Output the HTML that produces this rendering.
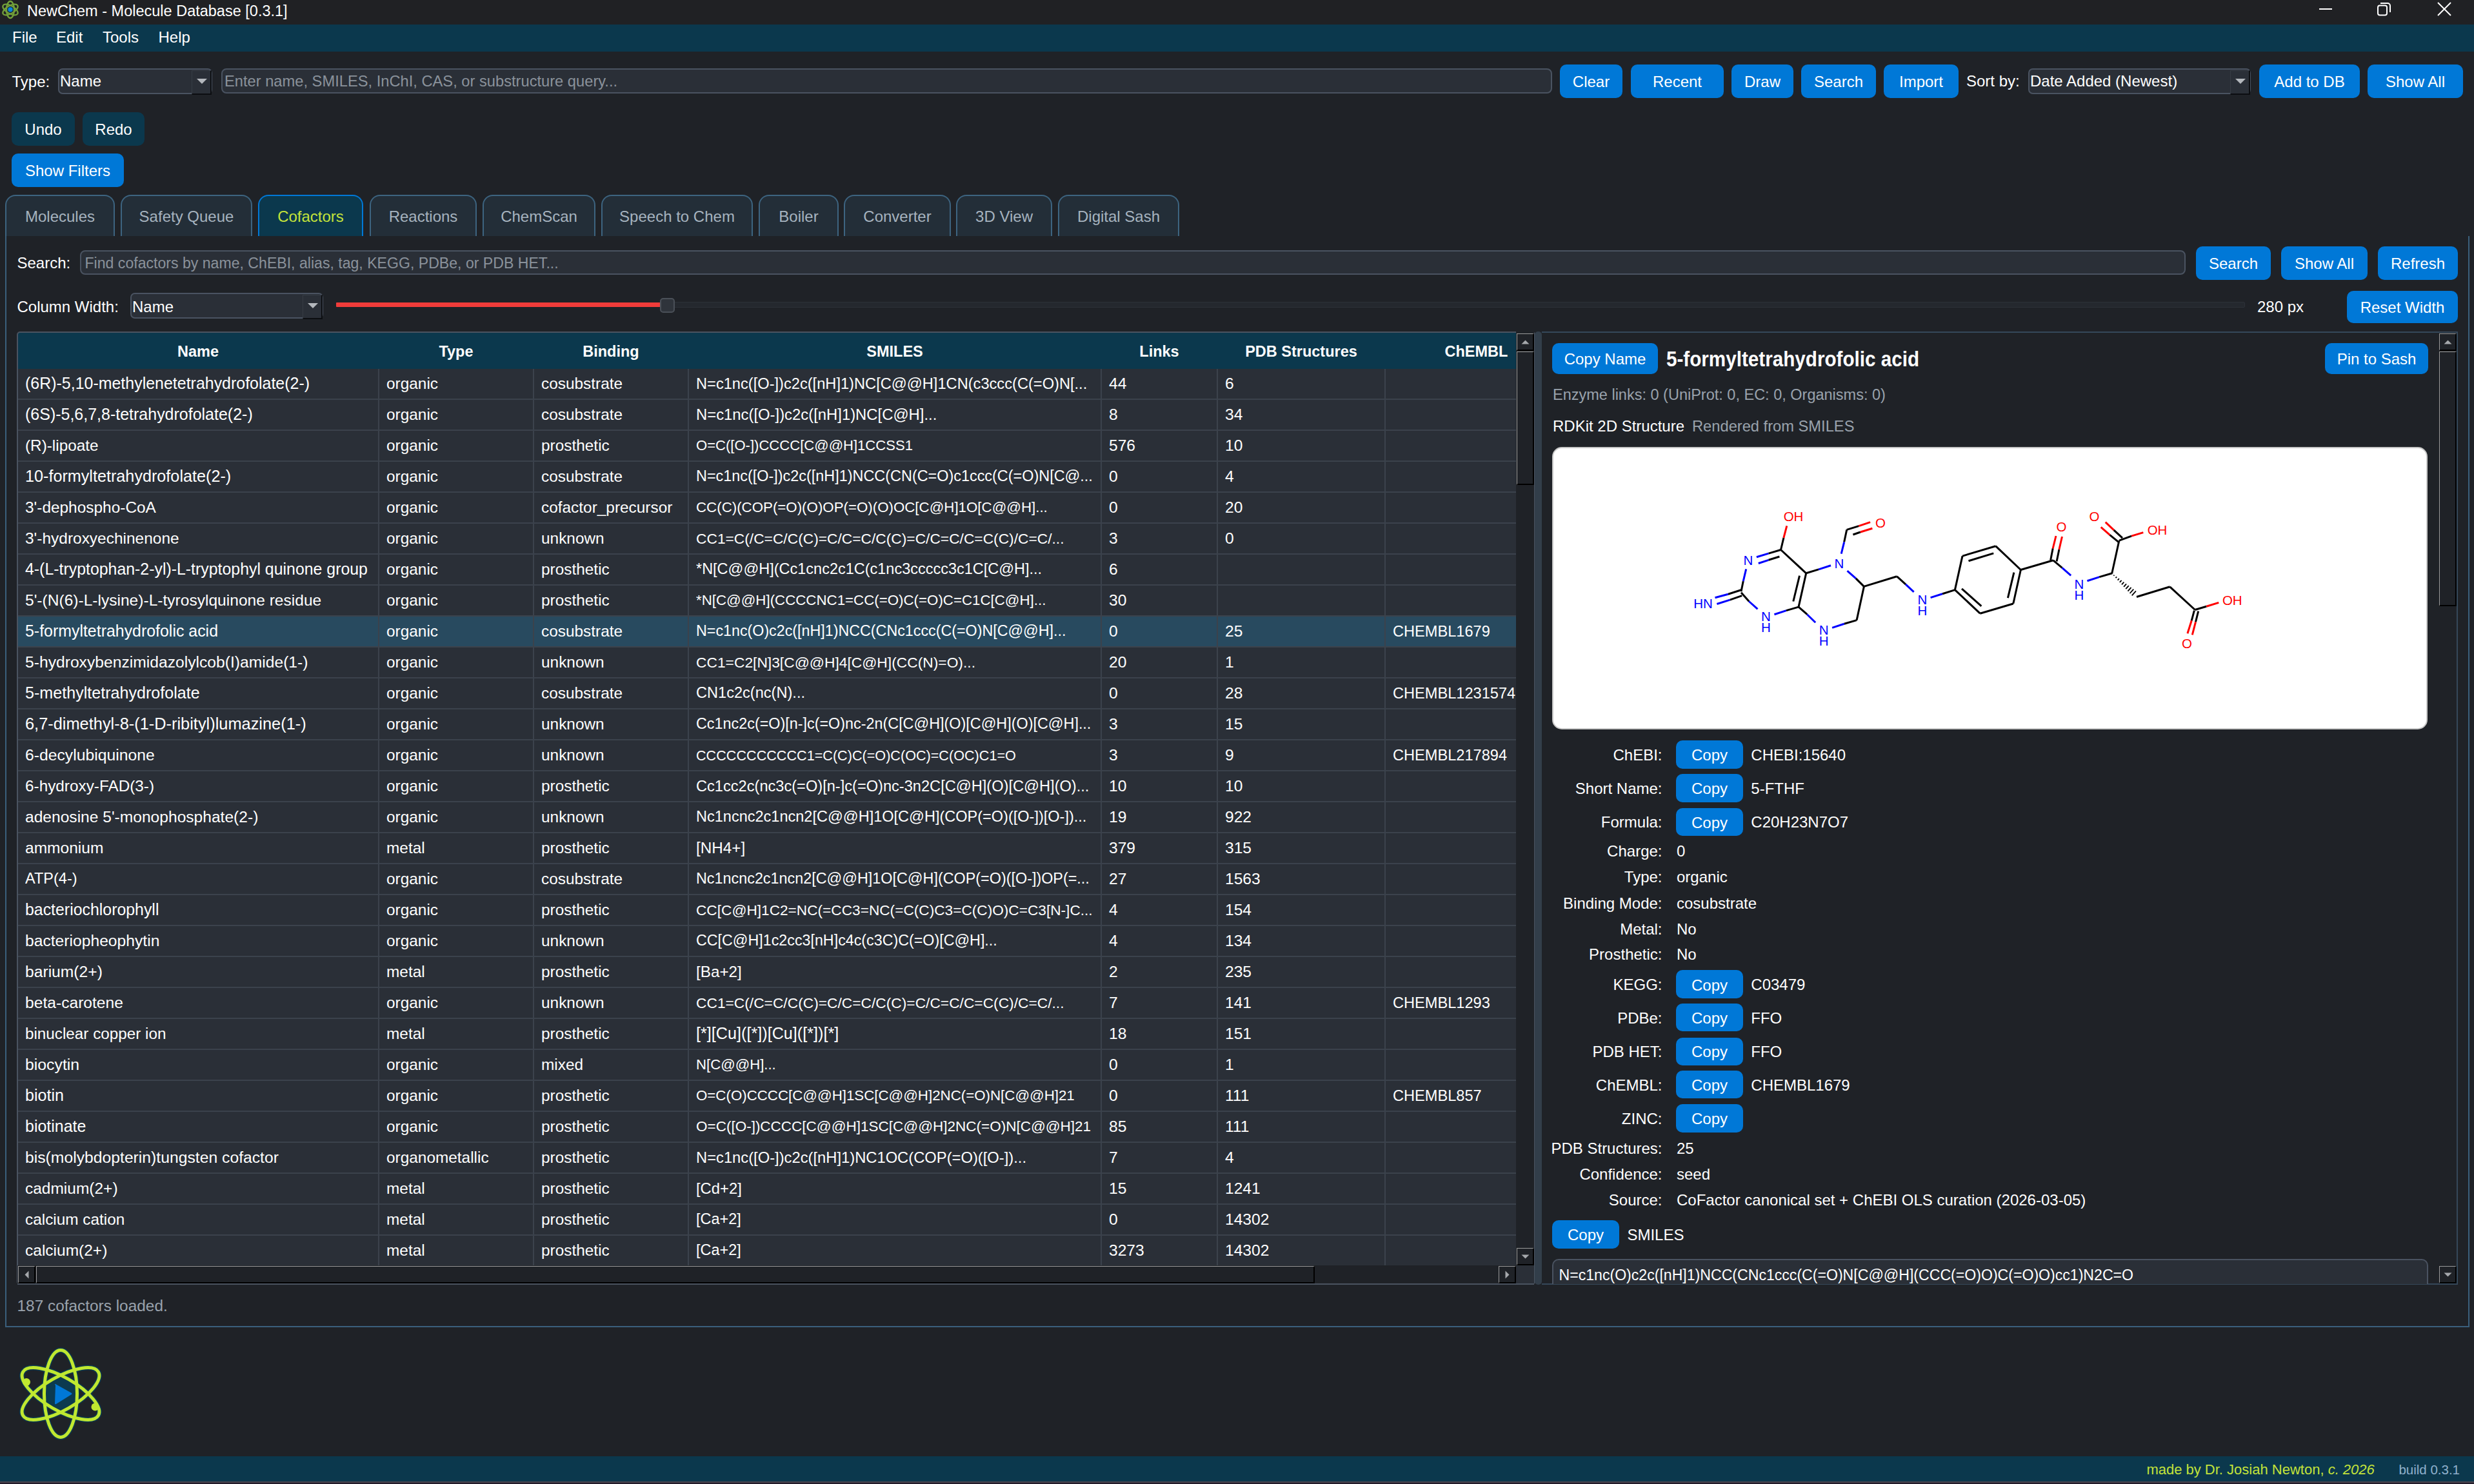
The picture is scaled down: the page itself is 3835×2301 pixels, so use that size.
<!DOCTYPE html>
<html><head><meta charset="utf-8"><style>
html,body{margin:0;padding:0;width:3835px;height:2301px;overflow:hidden;background:#1f2227;}
body{position:relative;font-family:"Liberation Sans", sans-serif;}
div,svg{position:absolute;}
</style></head><body>
<div style="left:0px;top:0px;width:3835px;height:38px;background:#202124;"></div>
<svg style="left:0;top:0" width="34" height="34" viewBox="0 0 34 34">
<g fill="none" stroke="#72a03a" stroke-width="2.3">
<ellipse cx="16" cy="15" rx="6" ry="13"/>
<ellipse cx="16" cy="15" rx="6" ry="13" transform="rotate(60 16 15)"/>
<ellipse cx="16" cy="15" rx="6" ry="13" transform="rotate(-60 16 15)"/>
</g><circle cx="16" cy="14.8" r="4.6" fill="#0b3550"/><circle cx="16" cy="14.8" r="3.6" fill="#0a82dc"/></svg>
<div style="top:3.35px;font-size:23.5px;line-height:29px;color:#ffffff;white-space:pre;left:42px;">NewChem - Molecule Database [0.3.1]</div>
<div style="left:3595px;top:13px;width:20px;height:2px;background:#ffffff;"></div>
<svg style="left:3680px;top:0" width="34" height="30"><g fill="none" stroke="#fff" stroke-width="2">
<rect x="6" y="8.5" width="14" height="15" rx="3"/><path d="M10 5 H21 a4 4 0 0 1 4 4 V19"/></g></svg>
<svg style="left:3774px;top:0" width="32" height="30"><g stroke="#fff" stroke-width="2"><path d="M5 4 L25 24 M25 4 L5 24"/></g></svg>
<div style="left:0px;top:38px;width:3835px;height:42px;background:#0b384d;"></div>
<div style="top:42.68px;font-size:24px;line-height:30px;color:#ffffff;white-space:pre;left:19px;">File</div>
<div style="top:42.68px;font-size:24px;line-height:30px;color:#ffffff;white-space:pre;left:87px;">Edit</div>
<div style="top:42.68px;font-size:24px;line-height:30px;color:#ffffff;white-space:pre;left:159px;">Tools</div>
<div style="top:42.68px;font-size:24px;line-height:30px;color:#ffffff;white-space:pre;left:245.5px;">Help</div>
<div style="left:0px;top:80px;width:3835px;height:2178px;background:#1f2227;"></div>
<div style="top:111.88px;font-size:24px;line-height:30px;color:#ffffff;white-space:pre;left:18.5px;">Type:</div>
<div style="left:90px;top:106px;width:239px;height:40px;background:#2a2f37;border:2px solid #4a5361;box-sizing:border-box;border-radius:7px;"></div>
<div style="left:297px;top:109px;width:31px;height:38px;background:#2a2f37;border-left:1px solid #363c44;border-top:1px solid #363c44;border-right:2px solid #0c0e11;border-bottom:2px solid #0c0e11;box-sizing:border-box"></div>
<svg style="left:304.0px;top:120.0px" width="18" height="12"><path d="M1 2 L17 2 L9 10 Z" fill="#b4b8bd"/></svg>
<div style="top:111.28px;font-size:24px;line-height:30px;color:#ffffff;white-space:pre;left:93px;">Name</div>
<div style="left:343px;top:106px;width:2063px;height:39px;background:#2a2f37;border:2px solid #4a5361;box-sizing:border-box;border-radius:8px;"></div>
<div style="top:111.38px;font-size:23.7px;line-height:30px;color:#8a929b;white-space:pre;left:348px;">Enter name, SMILES, InChI, CAS, or substructure query...</div>
<div style="left:2418px;top:100px;width:97px;height:52px;background:#0078d7;border-radius:10px;"></div>
<div style="top:112.44px;font-size:24px;line-height:30px;color:#ffffff;white-space:pre;left:2398.0px;width:137px;text-align:center;">Clear</div>
<div style="left:2528px;top:100px;width:144px;height:52px;background:#0078d7;border-radius:10px;"></div>
<div style="top:112.44px;font-size:24px;line-height:30px;color:#ffffff;white-space:pre;left:2508.0px;width:184px;text-align:center;">Recent</div>
<div style="left:2684px;top:100px;width:96px;height:52px;background:#0078d7;border-radius:10px;"></div>
<div style="top:112.44px;font-size:24px;line-height:30px;color:#ffffff;white-space:pre;left:2664.0px;width:136px;text-align:center;">Draw</div>
<div style="left:2792px;top:100px;width:116px;height:52px;background:#0078d7;border-radius:10px;"></div>
<div style="top:112.44px;font-size:24px;line-height:30px;color:#ffffff;white-space:pre;left:2772.0px;width:156px;text-align:center;">Search</div>
<div style="left:2920px;top:100px;width:116px;height:52px;background:#0078d7;border-radius:10px;"></div>
<div style="top:112.44px;font-size:24px;line-height:30px;color:#ffffff;white-space:pre;left:2900.0px;width:156px;text-align:center;">Import</div>
<div style="top:111.28px;font-size:24px;line-height:30px;color:#ffffff;white-space:pre;left:3048px;">Sort by:</div>
<div style="left:3144px;top:106px;width:345px;height:40px;background:#2a2f37;border:2px solid #4a5361;box-sizing:border-box;border-radius:7px;"></div>
<div style="left:3457px;top:109px;width:31px;height:38px;background:#2a2f37;border-left:1px solid #363c44;border-top:1px solid #363c44;border-right:2px solid #0c0e11;border-bottom:2px solid #0c0e11;box-sizing:border-box"></div>
<svg style="left:3464.0px;top:120.0px" width="18" height="12"><path d="M1 2 L17 2 L9 10 Z" fill="#b4b8bd"/></svg>
<div style="top:111.28px;font-size:24px;line-height:30px;color:#ffffff;white-space:pre;left:3147px;">Date Added (Newest)</div>
<div style="left:3502px;top:100px;width:156px;height:52px;background:#0078d7;border-radius:10px;"></div>
<div style="top:112.44px;font-size:24px;line-height:30px;color:#ffffff;white-space:pre;left:3482.0px;width:196px;text-align:center;">Add to DB</div>
<div style="left:3670px;top:100px;width:148px;height:52px;background:#0078d7;border-radius:10px;"></div>
<div style="top:112.44px;font-size:24px;line-height:30px;color:#ffffff;white-space:pre;left:3650.0px;width:188px;text-align:center;">Show All</div>
<div style="left:18px;top:174px;width:98px;height:52px;background:#0b384d;border-radius:10px;"></div>
<div style="top:186.44px;font-size:24px;line-height:30px;color:#ffffff;white-space:pre;left:-2.0px;width:138px;text-align:center;">Undo</div>
<div style="left:128px;top:174px;width:96px;height:52px;background:#0b384d;border-radius:10px;"></div>
<div style="top:186.44px;font-size:24px;line-height:30px;color:#ffffff;white-space:pre;left:108.0px;width:136px;text-align:center;">Redo</div>
<div style="left:18px;top:238px;width:174px;height:52px;background:#0078d7;border-radius:10px;"></div>
<div style="top:250.44px;font-size:24px;line-height:30px;color:#ffffff;white-space:pre;left:-2.0px;width:214px;text-align:center;">Show Filters</div>
<div style="left:8px;top:302px;width:170px;height:64px;background:#232e38;border:2px solid #3d6480;border-bottom:none;border-radius:16px 16px 0 0;box-sizing:border-box"></div>
<div style="top:320.68px;font-size:24px;line-height:30px;color:#a6b3bf;white-space:pre;left:-107.0px;width:400px;text-align:center;">Molecules</div>
<div style="left:187px;top:302px;width:204px;height:64px;background:#232e38;border:2px solid #3d6480;border-bottom:none;border-radius:16px 16px 0 0;box-sizing:border-box"></div>
<div style="top:320.68px;font-size:24px;line-height:30px;color:#a6b3bf;white-space:pre;left:89.0px;width:400px;text-align:center;">Safety Queue</div>
<div style="left:400px;top:302px;width:163px;height:64px;background:#0b384d;border:2px solid #0078d7;border-bottom:none;border-radius:16px 16px 0 0;box-sizing:border-box"></div>
<div style="top:320.68px;font-size:24px;line-height:30px;color:#c3e33a;white-space:pre;left:281.5px;width:400px;text-align:center;">Cofactors</div>
<div style="left:573px;top:302px;width:166px;height:64px;background:#232e38;border:2px solid #3d6480;border-bottom:none;border-radius:16px 16px 0 0;box-sizing:border-box"></div>
<div style="top:320.68px;font-size:24px;line-height:30px;color:#a6b3bf;white-space:pre;left:456.0px;width:400px;text-align:center;">Reactions</div>
<div style="left:748px;top:302px;width:175px;height:64px;background:#232e38;border:2px solid #3d6480;border-bottom:none;border-radius:16px 16px 0 0;box-sizing:border-box"></div>
<div style="top:320.68px;font-size:24px;line-height:30px;color:#a6b3bf;white-space:pre;left:635.5px;width:400px;text-align:center;">ChemScan</div>
<div style="left:932px;top:302px;width:235px;height:64px;background:#232e38;border:2px solid #3d6480;border-bottom:none;border-radius:16px 16px 0 0;box-sizing:border-box"></div>
<div style="top:320.68px;font-size:24px;line-height:30px;color:#a6b3bf;white-space:pre;left:849.5px;width:400px;text-align:center;">Speech to Chem</div>
<div style="left:1176px;top:302px;width:124px;height:64px;background:#232e38;border:2px solid #3d6480;border-bottom:none;border-radius:16px 16px 0 0;box-sizing:border-box"></div>
<div style="top:320.68px;font-size:24px;line-height:30px;color:#a6b3bf;white-space:pre;left:1038.0px;width:400px;text-align:center;">Boiler</div>
<div style="left:1308px;top:302px;width:166px;height:64px;background:#232e38;border:2px solid #3d6480;border-bottom:none;border-radius:16px 16px 0 0;box-sizing:border-box"></div>
<div style="top:320.68px;font-size:24px;line-height:30px;color:#a6b3bf;white-space:pre;left:1191.0px;width:400px;text-align:center;">Converter</div>
<div style="left:1482px;top:302px;width:149px;height:64px;background:#232e38;border:2px solid #3d6480;border-bottom:none;border-radius:16px 16px 0 0;box-sizing:border-box"></div>
<div style="top:320.68px;font-size:24px;line-height:30px;color:#a6b3bf;white-space:pre;left:1356.5px;width:400px;text-align:center;">3D View</div>
<div style="left:1640px;top:302px;width:188px;height:64px;background:#232e38;border:2px solid #3d6480;border-bottom:none;border-radius:16px 16px 0 0;box-sizing:border-box"></div>
<div style="top:320.68px;font-size:24px;line-height:30px;color:#a6b3bf;white-space:pre;left:1534.0px;width:400px;text-align:center;">Digital Sash</div>
<div style="left:8px;top:366px;width:3820px;height:1692px;border:2px solid #3a5f7c;border-top:none;box-sizing:border-box"></div>
<div style="top:392.98px;font-size:24px;line-height:30px;color:#ffffff;white-space:pre;left:26.5px;">Search:</div>
<div style="left:124px;top:388px;width:3264px;height:38px;background:#2a2f37;border:2px solid #4a5361;box-sizing:border-box;border-radius:8px;"></div>
<div style="top:393.79px;font-size:23.1px;line-height:29px;color:#8a929b;white-space:pre;left:131.5px;">Find cofactors by name, ChEBI, alias, tag, KEGG, PDBe, or PDB HET...</div>
<div style="left:3404px;top:382px;width:116px;height:52px;background:#0078d7;border-radius:10px;"></div>
<div style="top:394.44px;font-size:24px;line-height:30px;color:#ffffff;white-space:pre;left:3384.0px;width:156px;text-align:center;">Search</div>
<div style="left:3536px;top:382px;width:134px;height:52px;background:#0078d7;border-radius:10px;"></div>
<div style="top:394.44px;font-size:24px;line-height:30px;color:#ffffff;white-space:pre;left:3516.0px;width:174px;text-align:center;">Show All</div>
<div style="left:3686px;top:382px;width:124px;height:52px;background:#0078d7;border-radius:10px;"></div>
<div style="top:394.44px;font-size:24px;line-height:30px;color:#ffffff;white-space:pre;left:3666.0px;width:164px;text-align:center;">Refresh</div>
<div style="top:460.68px;font-size:24px;line-height:30px;color:#ffffff;white-space:pre;left:26.5px;">Column Width:</div>
<div style="left:202px;top:454px;width:299px;height:40px;background:#2a2f37;border:2px solid #4a5361;box-sizing:border-box;border-radius:7px;"></div>
<div style="left:469px;top:457px;width:31px;height:38px;background:#2a2f37;border-left:1px solid #363c44;border-top:1px solid #363c44;border-right:2px solid #0c0e11;border-bottom:2px solid #0c0e11;box-sizing:border-box"></div>
<svg style="left:476.0px;top:468.0px" width="18" height="12"><path d="M1 2 L17 2 L9 10 Z" fill="#b4b8bd"/></svg>
<div style="top:460.68px;font-size:24px;line-height:30px;color:#ffffff;white-space:pre;left:205px;">Name</div>
<div style="left:1040px;top:468px;width:2440px;height:9px;background:#24282e;border:1px solid #2c3138;box-sizing:border-box;border-radius:2px;"></div>
<div style="left:521px;top:469px;width:506px;height:7px;background:#f03c3a;border-radius:1px;"></div>
<div style="left:1023px;top:462px;width:23px;height:23px;background:#2f343b;border:2px solid #4a5058;box-sizing:border-box;border-radius:5px;"></div>
<div style="top:460.68px;font-size:24px;line-height:30px;color:#ffffff;white-space:pre;left:3499px;">280 px</div>
<div style="left:3638px;top:451px;width:172px;height:50px;background:#0078d7;border-radius:10px;"></div>
<div style="top:462.44px;font-size:24px;line-height:30px;color:#ffffff;white-space:pre;left:3618.0px;width:212px;text-align:center;">Reset Width</div>
<div style="left:28px;top:516px;width:2322px;height:1446px;overflow:hidden;background:#2a2f37">
<div style="left:0;top:0;width:2400px;height:56px;background:#0b384d"></div>
<div style="top:15.35px;font-size:23.5px;line-height:29px;color:#ffffff;white-space:pre;font-weight:700;left:79.0px;width:400px;text-align:center;">Name</div>
<div style="top:15.35px;font-size:23.5px;line-height:29px;color:#ffffff;white-space:pre;font-weight:700;left:479.0px;width:400px;text-align:center;">Type</div>
<div style="top:15.35px;font-size:23.5px;line-height:29px;color:#ffffff;white-space:pre;font-weight:700;left:719.0px;width:400px;text-align:center;">Binding</div>
<div style="top:15.35px;font-size:23.5px;line-height:29px;color:#ffffff;white-space:pre;font-weight:700;left:1159.0px;width:400px;text-align:center;">SMILES</div>
<div style="top:15.35px;font-size:23.5px;line-height:29px;color:#ffffff;white-space:pre;font-weight:700;left:1569.0px;width:400px;text-align:center;">Links</div>
<div style="top:15.35px;font-size:23.5px;line-height:29px;color:#ffffff;white-space:pre;font-weight:700;left:1789.0px;width:400px;text-align:center;">PDB Structures</div>
<div style="top:15.35px;font-size:23.5px;line-height:29px;color:#ffffff;white-space:pre;font-weight:700;left:2060.5px;width:400px;text-align:center;">ChEMBL</div>
<div style="left:0;top:102px;width:2400px;height:2px;background:#3b424c"></div>
<div style="left:11px;top:56px;width:546px;height:46px;overflow:hidden">
<div style="top:6.85px;font-size:24.96254604390747px;line-height:31px;color:#ffffff;white-space:pre;left:0px;">(6R)-5,10-methylenetetrahydrofolate(2-)</div>
</div>
<div style="left:571px;top:56px;width:226px;height:46px;overflow:hidden">
<div style="top:7.54px;font-size:24.4px;line-height:30px;color:#ffffff;white-space:pre;left:0px;">organic</div>
</div>
<div style="left:811px;top:56px;width:226px;height:46px;overflow:hidden">
<div style="top:7.54px;font-size:24.4px;line-height:30px;color:#ffffff;white-space:pre;left:0px;">cosubstrate</div>
</div>
<div style="left:1051px;top:56px;width:626px;height:46px;overflow:hidden">
<div style="top:7.80px;font-size:23.65806549885758px;line-height:30px;color:#ffffff;white-space:pre;left:0px;">N=c1nc([O-])c2c([nH]1)NC[C@@H]1CN(c3ccc(C(=O)N[...</div>
</div>
<div style="left:1691px;top:56px;width:166px;height:46px;overflow:hidden">
<div style="top:6.97px;font-size:24.6px;line-height:31px;color:#ffffff;white-space:pre;left:0px;">44</div>
</div>
<div style="left:1871px;top:56px;width:246px;height:46px;overflow:hidden">
<div style="top:6.97px;font-size:24.6px;line-height:31px;color:#ffffff;white-space:pre;left:0px;">6</div>
</div>
<div style="left:0;top:150px;width:2400px;height:2px;background:#3b424c"></div>
<div style="left:11px;top:104px;width:546px;height:46px;overflow:hidden">
<div style="top:6.84px;font-size:24.99081350304372px;line-height:31px;color:#ffffff;white-space:pre;left:0px;">(6S)-5,6,7,8-tetrahydrofolate(2-)</div>
</div>
<div style="left:571px;top:104px;width:226px;height:46px;overflow:hidden">
<div style="top:7.54px;font-size:24.4px;line-height:30px;color:#ffffff;white-space:pre;left:0px;">organic</div>
</div>
<div style="left:811px;top:104px;width:226px;height:46px;overflow:hidden">
<div style="top:7.54px;font-size:24.4px;line-height:30px;color:#ffffff;white-space:pre;left:0px;">cosubstrate</div>
</div>
<div style="left:1051px;top:104px;width:626px;height:46px;overflow:hidden">
<div style="top:7.73px;font-size:23.856287425149702px;line-height:30px;color:#ffffff;white-space:pre;left:0px;">N=c1nc([O-])c2c([nH]1)NC[C@H]...</div>
</div>
<div style="left:1691px;top:104px;width:166px;height:46px;overflow:hidden">
<div style="top:6.97px;font-size:24.6px;line-height:31px;color:#ffffff;white-space:pre;left:0px;">8</div>
</div>
<div style="left:1871px;top:104px;width:246px;height:46px;overflow:hidden">
<div style="top:6.97px;font-size:24.6px;line-height:31px;color:#ffffff;white-space:pre;left:0px;">34</div>
</div>
<div style="left:0;top:198px;width:2400px;height:2px;background:#3b424c"></div>
<div style="left:11px;top:152px;width:546px;height:46px;overflow:hidden">
<div style="top:7.56px;font-size:24.336066945606692px;line-height:30px;color:#ffffff;white-space:pre;left:0px;">(R)-lipoate</div>
</div>
<div style="left:571px;top:152px;width:226px;height:46px;overflow:hidden">
<div style="top:7.54px;font-size:24.4px;line-height:30px;color:#ffffff;white-space:pre;left:0px;">organic</div>
</div>
<div style="left:811px;top:152px;width:226px;height:46px;overflow:hidden">
<div style="top:7.54px;font-size:24.4px;line-height:30px;color:#ffffff;white-space:pre;left:0px;">prosthetic</div>
</div>
<div style="left:1051px;top:152px;width:626px;height:46px;overflow:hidden">
<div style="top:9.34px;font-size:22.079835813237555px;line-height:28px;color:#ffffff;white-space:pre;left:0px;">O=C([O-])CCCC[C@@H]1CCSS1</div>
</div>
<div style="left:1691px;top:152px;width:166px;height:46px;overflow:hidden">
<div style="top:6.97px;font-size:24.6px;line-height:31px;color:#ffffff;white-space:pre;left:0px;">576</div>
</div>
<div style="left:1871px;top:152px;width:246px;height:46px;overflow:hidden">
<div style="top:6.97px;font-size:24.6px;line-height:31px;color:#ffffff;white-space:pre;left:0px;">10</div>
</div>
<div style="left:0;top:246px;width:2400px;height:2px;background:#3b424c"></div>
<div style="left:11px;top:200px;width:546px;height:46px;overflow:hidden">
<div style="top:6.76px;font-size:25.197533908754625px;line-height:31px;color:#ffffff;white-space:pre;left:0px;">10-formyltetrahydrofolate(2-)</div>
</div>
<div style="left:571px;top:200px;width:226px;height:46px;overflow:hidden">
<div style="top:7.54px;font-size:24.4px;line-height:30px;color:#ffffff;white-space:pre;left:0px;">organic</div>
</div>
<div style="left:811px;top:200px;width:226px;height:46px;overflow:hidden">
<div style="top:7.54px;font-size:24.4px;line-height:30px;color:#ffffff;white-space:pre;left:0px;">cosubstrate</div>
</div>
<div style="left:1051px;top:200px;width:626px;height:46px;overflow:hidden">
<div style="top:8.38px;font-size:23.420507100899698px;line-height:29px;color:#ffffff;white-space:pre;left:0px;">N=c1nc([O-])c2c([nH]1)NCC(CN(C=O)c1ccc(C(=O)N[C@...</div>
</div>
<div style="left:1691px;top:200px;width:166px;height:46px;overflow:hidden">
<div style="top:6.97px;font-size:24.6px;line-height:31px;color:#ffffff;white-space:pre;left:0px;">0</div>
</div>
<div style="left:1871px;top:200px;width:246px;height:46px;overflow:hidden">
<div style="top:6.97px;font-size:24.6px;line-height:31px;color:#ffffff;white-space:pre;left:0px;">4</div>
</div>
<div style="left:0;top:294px;width:2400px;height:2px;background:#3b424c"></div>
<div style="left:11px;top:248px;width:546px;height:46px;overflow:hidden">
<div style="top:7.03px;font-size:24.434448710916072px;line-height:31px;color:#ffffff;white-space:pre;left:0px;">3&#x27;-dephospho-CoA</div>
</div>
<div style="left:571px;top:248px;width:226px;height:46px;overflow:hidden">
<div style="top:7.54px;font-size:24.4px;line-height:30px;color:#ffffff;white-space:pre;left:0px;">organic</div>
</div>
<div style="left:811px;top:248px;width:226px;height:46px;overflow:hidden">
<div style="top:7.54px;font-size:24.4px;line-height:30px;color:#ffffff;white-space:pre;left:0px;">cofactor_precursor</div>
</div>
<div style="left:1051px;top:248px;width:626px;height:46px;overflow:hidden">
<div style="top:9.26px;font-size:22.317633892885688px;line-height:28px;color:#ffffff;white-space:pre;left:0px;">CC(C)(COP(=O)(O)OP(=O)(O)OC[C@H]1O[C@@H]...</div>
</div>
<div style="left:1691px;top:248px;width:166px;height:46px;overflow:hidden">
<div style="top:6.97px;font-size:24.6px;line-height:31px;color:#ffffff;white-space:pre;left:0px;">0</div>
</div>
<div style="left:1871px;top:248px;width:246px;height:46px;overflow:hidden">
<div style="top:6.97px;font-size:24.6px;line-height:31px;color:#ffffff;white-space:pre;left:0px;">20</div>
</div>
<div style="left:0;top:342px;width:2400px;height:2px;background:#3b424c"></div>
<div style="left:11px;top:296px;width:546px;height:46px;overflow:hidden">
<div style="top:7.01px;font-size:24.47388024831453px;line-height:31px;color:#ffffff;white-space:pre;left:0px;">3&#x27;-hydroxyechinenone</div>
</div>
<div style="left:571px;top:296px;width:226px;height:46px;overflow:hidden">
<div style="top:7.54px;font-size:24.4px;line-height:30px;color:#ffffff;white-space:pre;left:0px;">organic</div>
</div>
<div style="left:811px;top:296px;width:226px;height:46px;overflow:hidden">
<div style="top:7.54px;font-size:24.4px;line-height:30px;color:#ffffff;white-space:pre;left:0px;">unknown</div>
</div>
<div style="left:1051px;top:296px;width:626px;height:46px;overflow:hidden">
<div style="top:9.10px;font-size:22.78260327357755px;line-height:28px;color:#ffffff;white-space:pre;left:0px;">CC1=C(/C=C/C(C)=C/C=C/C(C)=C/C=C/C=C(C)/C=C/...</div>
</div>
<div style="left:1691px;top:296px;width:166px;height:46px;overflow:hidden">
<div style="top:6.97px;font-size:24.6px;line-height:31px;color:#ffffff;white-space:pre;left:0px;">3</div>
</div>
<div style="left:1871px;top:296px;width:246px;height:46px;overflow:hidden">
<div style="top:6.97px;font-size:24.6px;line-height:31px;color:#ffffff;white-space:pre;left:0px;">0</div>
</div>
<div style="left:0;top:390px;width:2400px;height:2px;background:#3b424c"></div>
<div style="left:11px;top:344px;width:546px;height:46px;overflow:hidden">
<div style="top:6.87px;font-size:24.896458746377913px;line-height:31px;color:#ffffff;white-space:pre;left:0px;">4-(L-tryptophan-2-yl)-L-tryptophyl quinone group</div>
</div>
<div style="left:571px;top:344px;width:226px;height:46px;overflow:hidden">
<div style="top:7.54px;font-size:24.4px;line-height:30px;color:#ffffff;white-space:pre;left:0px;">organic</div>
</div>
<div style="left:811px;top:344px;width:226px;height:46px;overflow:hidden">
<div style="top:7.54px;font-size:24.4px;line-height:30px;color:#ffffff;white-space:pre;left:0px;">prosthetic</div>
</div>
<div style="left:1051px;top:344px;width:626px;height:46px;overflow:hidden">
<div style="top:8.35px;font-size:23.49295003422313px;line-height:29px;color:#ffffff;white-space:pre;left:0px;">*N[C@@H](Cc1cnc2c1C(c1nc3ccccc3c1C[C@H]...</div>
</div>
<div style="left:1691px;top:344px;width:166px;height:46px;overflow:hidden">
<div style="top:6.97px;font-size:24.6px;line-height:31px;color:#ffffff;white-space:pre;left:0px;">6</div>
</div>
<div style="left:0;top:438px;width:2400px;height:2px;background:#3b424c"></div>
<div style="left:11px;top:392px;width:546px;height:46px;overflow:hidden">
<div style="top:6.98px;font-size:24.57578606497441px;line-height:31px;color:#ffffff;white-space:pre;left:0px;">5&#x27;-(N(6)-L-lysine)-L-tyrosylquinone residue</div>
</div>
<div style="left:571px;top:392px;width:226px;height:46px;overflow:hidden">
<div style="top:7.54px;font-size:24.4px;line-height:30px;color:#ffffff;white-space:pre;left:0px;">organic</div>
</div>
<div style="left:811px;top:392px;width:226px;height:46px;overflow:hidden">
<div style="top:7.54px;font-size:24.4px;line-height:30px;color:#ffffff;white-space:pre;left:0px;">prosthetic</div>
</div>
<div style="left:1051px;top:392px;width:626px;height:46px;overflow:hidden">
<div style="top:9.27px;font-size:22.309902580023554px;line-height:28px;color:#ffffff;white-space:pre;left:0px;">*N[C@@H](CCCCNC1=CC(=O)C(=O)C=C1C[C@H]...</div>
</div>
<div style="left:1691px;top:392px;width:166px;height:46px;overflow:hidden">
<div style="top:6.97px;font-size:24.6px;line-height:31px;color:#ffffff;white-space:pre;left:0px;">30</div>
</div>
<div style="left:0;top:440px;width:2400px;height:46px;background:#284a5f"></div>
<div style="left:0;top:486px;width:2400px;height:2px;background:#3b424c"></div>
<div style="left:11px;top:440px;width:546px;height:46px;overflow:hidden">
<div style="top:6.86px;font-size:24.923867888714135px;line-height:31px;color:#ffffff;white-space:pre;left:0px;">5-formyltetrahydrofolic acid</div>
</div>
<div style="left:571px;top:440px;width:226px;height:46px;overflow:hidden">
<div style="top:7.54px;font-size:24.4px;line-height:30px;color:#ffffff;white-space:pre;left:0px;">organic</div>
</div>
<div style="left:811px;top:440px;width:226px;height:46px;overflow:hidden">
<div style="top:7.54px;font-size:24.4px;line-height:30px;color:#ffffff;white-space:pre;left:0px;">cosubstrate</div>
</div>
<div style="left:1051px;top:440px;width:626px;height:46px;overflow:hidden">
<div style="top:8.43px;font-size:23.27555543814229px;line-height:29px;color:#ffffff;white-space:pre;left:0px;">N=c1nc(O)c2c([nH]1)NCC(CNc1ccc(C(=O)N[C@@H]...</div>
</div>
<div style="left:1691px;top:440px;width:166px;height:46px;overflow:hidden">
<div style="top:6.97px;font-size:24.6px;line-height:31px;color:#ffffff;white-space:pre;left:0px;">0</div>
</div>
<div style="left:1871px;top:440px;width:246px;height:46px;overflow:hidden">
<div style="top:6.97px;font-size:24.6px;line-height:31px;color:#ffffff;white-space:pre;left:0px;">25</div>
</div>
<div style="left:2131px;top:440px;width:269px;height:46px;overflow:hidden">
<div style="top:7.82px;font-size:23.6px;line-height:30px;color:#ffffff;white-space:pre;left:0px;">CHEMBL1679</div>
</div>
<div style="left:0;top:534px;width:2400px;height:2px;background:#3b424c"></div>
<div style="left:11px;top:488px;width:546px;height:46px;overflow:hidden">
<div style="top:6.94px;font-size:24.678786103891348px;line-height:31px;color:#ffffff;white-space:pre;left:0px;">5-hydroxybenzimidazolylcob(I)amide(1-)</div>
</div>
<div style="left:571px;top:488px;width:226px;height:46px;overflow:hidden">
<div style="top:7.54px;font-size:24.4px;line-height:30px;color:#ffffff;white-space:pre;left:0px;">organic</div>
</div>
<div style="left:811px;top:488px;width:226px;height:46px;overflow:hidden">
<div style="top:7.54px;font-size:24.4px;line-height:30px;color:#ffffff;white-space:pre;left:0px;">unknown</div>
</div>
<div style="left:1051px;top:488px;width:626px;height:46px;overflow:hidden">
<div style="top:8.59px;font-size:22.814644179350065px;line-height:29px;color:#ffffff;white-space:pre;left:0px;">CC1=C2[N]3[C@@H]4[C@H](CC(N)=O)...</div>
</div>
<div style="left:1691px;top:488px;width:166px;height:46px;overflow:hidden">
<div style="top:6.97px;font-size:24.6px;line-height:31px;color:#ffffff;white-space:pre;left:0px;">20</div>
</div>
<div style="left:1871px;top:488px;width:246px;height:46px;overflow:hidden">
<div style="top:6.97px;font-size:24.6px;line-height:31px;color:#ffffff;white-space:pre;left:0px;">1</div>
</div>
<div style="left:0;top:582px;width:2400px;height:2px;background:#3b424c"></div>
<div style="left:11px;top:536px;width:546px;height:46px;overflow:hidden">
<div style="top:6.79px;font-size:25.113131679043654px;line-height:31px;color:#ffffff;white-space:pre;left:0px;">5-methyltetrahydrofolate</div>
</div>
<div style="left:571px;top:536px;width:226px;height:46px;overflow:hidden">
<div style="top:7.54px;font-size:24.4px;line-height:30px;color:#ffffff;white-space:pre;left:0px;">organic</div>
</div>
<div style="left:811px;top:536px;width:226px;height:46px;overflow:hidden">
<div style="top:7.54px;font-size:24.4px;line-height:30px;color:#ffffff;white-space:pre;left:0px;">cosubstrate</div>
</div>
<div style="left:1051px;top:536px;width:626px;height:46px;overflow:hidden">
<div style="top:8.32px;font-size:23.591062670299724px;line-height:29px;color:#ffffff;white-space:pre;left:0px;">CN1c2c(nc(N)...</div>
</div>
<div style="left:1691px;top:536px;width:166px;height:46px;overflow:hidden">
<div style="top:6.97px;font-size:24.6px;line-height:31px;color:#ffffff;white-space:pre;left:0px;">0</div>
</div>
<div style="left:1871px;top:536px;width:246px;height:46px;overflow:hidden">
<div style="top:6.97px;font-size:24.6px;line-height:31px;color:#ffffff;white-space:pre;left:0px;">28</div>
</div>
<div style="left:2131px;top:536px;width:269px;height:46px;overflow:hidden">
<div style="top:7.82px;font-size:23.6px;line-height:30px;color:#ffffff;white-space:pre;left:0px;">CHEMBL1231574</div>
</div>
<div style="left:0;top:630px;width:2400px;height:2px;background:#3b424c"></div>
<div style="left:11px;top:584px;width:546px;height:46px;overflow:hidden">
<div style="top:6.19px;font-size:25.399067227846665px;line-height:32px;color:#ffffff;white-space:pre;left:0px;">6,7-dimethyl-8-(1-D-ribityl)lumazine(1-)</div>
</div>
<div style="left:571px;top:584px;width:226px;height:46px;overflow:hidden">
<div style="top:7.54px;font-size:24.4px;line-height:30px;color:#ffffff;white-space:pre;left:0px;">organic</div>
</div>
<div style="left:811px;top:584px;width:226px;height:46px;overflow:hidden">
<div style="top:7.54px;font-size:24.4px;line-height:30px;color:#ffffff;white-space:pre;left:0px;">unknown</div>
</div>
<div style="left:1051px;top:584px;width:626px;height:46px;overflow:hidden">
<div style="top:8.40px;font-size:23.36843987483237px;line-height:29px;color:#ffffff;white-space:pre;left:0px;">Cc1nc2c(=O)[n-]c(=O)nc-2n(C[C@H](O)[C@H](O)[C@H]...</div>
</div>
<div style="left:1691px;top:584px;width:166px;height:46px;overflow:hidden">
<div style="top:6.97px;font-size:24.6px;line-height:31px;color:#ffffff;white-space:pre;left:0px;">3</div>
</div>
<div style="left:1871px;top:584px;width:246px;height:46px;overflow:hidden">
<div style="top:6.97px;font-size:24.6px;line-height:31px;color:#ffffff;white-space:pre;left:0px;">15</div>
</div>
<div style="left:0;top:678px;width:2400px;height:2px;background:#3b424c"></div>
<div style="left:11px;top:632px;width:546px;height:46px;overflow:hidden">
<div style="top:6.93px;font-size:24.725312800769967px;line-height:31px;color:#ffffff;white-space:pre;left:0px;">6-decylubiquinone</div>
</div>
<div style="left:571px;top:632px;width:226px;height:46px;overflow:hidden">
<div style="top:7.54px;font-size:24.4px;line-height:30px;color:#ffffff;white-space:pre;left:0px;">organic</div>
</div>
<div style="left:811px;top:632px;width:226px;height:46px;overflow:hidden">
<div style="top:7.54px;font-size:24.4px;line-height:30px;color:#ffffff;white-space:pre;left:0px;">unknown</div>
</div>
<div style="left:1051px;top:632px;width:626px;height:46px;overflow:hidden">
<div style="top:10.00px;font-size:21.62969016002724px;line-height:27px;color:#ffffff;white-space:pre;left:0px;">CCCCCCCCCCC1=C(C)C(=O)C(OC)=C(OC)C1=O</div>
</div>
<div style="left:1691px;top:632px;width:166px;height:46px;overflow:hidden">
<div style="top:6.97px;font-size:24.6px;line-height:31px;color:#ffffff;white-space:pre;left:0px;">3</div>
</div>
<div style="left:1871px;top:632px;width:246px;height:46px;overflow:hidden">
<div style="top:6.97px;font-size:24.6px;line-height:31px;color:#ffffff;white-space:pre;left:0px;">9</div>
</div>
<div style="left:2131px;top:632px;width:269px;height:46px;overflow:hidden">
<div style="top:7.82px;font-size:23.6px;line-height:30px;color:#ffffff;white-space:pre;left:0px;">CHEMBL217894</div>
</div>
<div style="left:0;top:726px;width:2400px;height:2px;background:#3b424c"></div>
<div style="left:11px;top:680px;width:546px;height:46px;overflow:hidden">
<div style="top:7.56px;font-size:24.343508549715004px;line-height:30px;color:#ffffff;white-space:pre;left:0px;">6-hydroxy-FAD(3-)</div>
</div>
<div style="left:571px;top:680px;width:226px;height:46px;overflow:hidden">
<div style="top:7.54px;font-size:24.4px;line-height:30px;color:#ffffff;white-space:pre;left:0px;">organic</div>
</div>
<div style="left:811px;top:680px;width:226px;height:46px;overflow:hidden">
<div style="top:7.54px;font-size:24.4px;line-height:30px;color:#ffffff;white-space:pre;left:0px;">prosthetic</div>
</div>
<div style="left:1051px;top:680px;width:626px;height:46px;overflow:hidden">
<div style="top:7.81px;font-size:23.628683128609982px;line-height:30px;color:#ffffff;white-space:pre;left:0px;">Cc1cc2c(nc3c(=O)[n-]c(=O)nc-3n2C[C@H](O)[C@H](O)...</div>
</div>
<div style="left:1691px;top:680px;width:166px;height:46px;overflow:hidden">
<div style="top:6.97px;font-size:24.6px;line-height:31px;color:#ffffff;white-space:pre;left:0px;">10</div>
</div>
<div style="left:1871px;top:680px;width:246px;height:46px;overflow:hidden">
<div style="top:6.97px;font-size:24.6px;line-height:31px;color:#ffffff;white-space:pre;left:0px;">10</div>
</div>
<div style="left:0;top:774px;width:2400px;height:2px;background:#3b424c"></div>
<div style="left:11px;top:728px;width:546px;height:46px;overflow:hidden">
<div style="top:6.97px;font-size:24.589876444798726px;line-height:31px;color:#ffffff;white-space:pre;left:0px;">adenosine 5&#x27;-monophosphate(2-)</div>
</div>
<div style="left:571px;top:728px;width:226px;height:46px;overflow:hidden">
<div style="top:7.54px;font-size:24.4px;line-height:30px;color:#ffffff;white-space:pre;left:0px;">organic</div>
</div>
<div style="left:811px;top:728px;width:226px;height:46px;overflow:hidden">
<div style="top:7.54px;font-size:24.4px;line-height:30px;color:#ffffff;white-space:pre;left:0px;">unknown</div>
</div>
<div style="left:1051px;top:728px;width:626px;height:46px;overflow:hidden">
<div style="top:8.34px;font-size:23.523799408239135px;line-height:29px;color:#ffffff;white-space:pre;left:0px;">Nc1ncnc2c1ncn2[C@@H]1O[C@H](COP(=O)([O-])[O-])...</div>
</div>
<div style="left:1691px;top:728px;width:166px;height:46px;overflow:hidden">
<div style="top:6.97px;font-size:24.6px;line-height:31px;color:#ffffff;white-space:pre;left:0px;">19</div>
</div>
<div style="left:1871px;top:728px;width:246px;height:46px;overflow:hidden">
<div style="top:6.97px;font-size:24.6px;line-height:31px;color:#ffffff;white-space:pre;left:0px;">922</div>
</div>
<div style="left:0;top:822px;width:2400px;height:2px;background:#3b424c"></div>
<div style="left:11px;top:776px;width:546px;height:46px;overflow:hidden">
<div style="top:6.98px;font-size:24.565486376201132px;line-height:31px;color:#ffffff;white-space:pre;left:0px;">ammonium</div>
</div>
<div style="left:571px;top:776px;width:226px;height:46px;overflow:hidden">
<div style="top:7.54px;font-size:24.4px;line-height:30px;color:#ffffff;white-space:pre;left:0px;">metal</div>
</div>
<div style="left:811px;top:776px;width:226px;height:46px;overflow:hidden">
<div style="top:7.54px;font-size:24.4px;line-height:30px;color:#ffffff;white-space:pre;left:0px;">prosthetic</div>
</div>
<div style="left:1051px;top:776px;width:626px;height:46px;overflow:hidden">
<div style="top:7.58px;font-size:24.294527363184077px;line-height:30px;color:#ffffff;white-space:pre;left:0px;">[NH4+]</div>
</div>
<div style="left:1691px;top:776px;width:166px;height:46px;overflow:hidden">
<div style="top:6.97px;font-size:24.6px;line-height:31px;color:#ffffff;white-space:pre;left:0px;">379</div>
</div>
<div style="left:1871px;top:776px;width:246px;height:46px;overflow:hidden">
<div style="top:6.97px;font-size:24.6px;line-height:31px;color:#ffffff;white-space:pre;left:0px;">315</div>
</div>
<div style="left:0;top:870px;width:2400px;height:2px;background:#3b424c"></div>
<div style="left:11px;top:824px;width:546px;height:46px;overflow:hidden">
<div style="top:8.34px;font-size:23.527480045610034px;line-height:29px;color:#ffffff;white-space:pre;left:0px;">ATP(4-)</div>
</div>
<div style="left:571px;top:824px;width:226px;height:46px;overflow:hidden">
<div style="top:7.54px;font-size:24.4px;line-height:30px;color:#ffffff;white-space:pre;left:0px;">organic</div>
</div>
<div style="left:811px;top:824px;width:226px;height:46px;overflow:hidden">
<div style="top:7.54px;font-size:24.4px;line-height:30px;color:#ffffff;white-space:pre;left:0px;">cosubstrate</div>
</div>
<div style="left:1051px;top:824px;width:626px;height:46px;overflow:hidden">
<div style="top:8.40px;font-size:23.361755610972565px;line-height:29px;color:#ffffff;white-space:pre;left:0px;">Nc1ncnc2c1ncn2[C@@H]1O[C@H](COP(=O)([O-])OP(=...</div>
</div>
<div style="left:1691px;top:824px;width:166px;height:46px;overflow:hidden">
<div style="top:6.97px;font-size:24.6px;line-height:31px;color:#ffffff;white-space:pre;left:0px;">27</div>
</div>
<div style="left:1871px;top:824px;width:246px;height:46px;overflow:hidden">
<div style="top:6.97px;font-size:24.6px;line-height:31px;color:#ffffff;white-space:pre;left:0px;">1563</div>
</div>
<div style="left:0;top:918px;width:2400px;height:2px;background:#3b424c"></div>
<div style="left:11px;top:872px;width:546px;height:46px;overflow:hidden">
<div style="top:6.87px;font-size:24.88639025532912px;line-height:31px;color:#ffffff;white-space:pre;left:0px;">bacteriochlorophyll</div>
</div>
<div style="left:571px;top:872px;width:226px;height:46px;overflow:hidden">
<div style="top:7.54px;font-size:24.4px;line-height:30px;color:#ffffff;white-space:pre;left:0px;">organic</div>
</div>
<div style="left:811px;top:872px;width:226px;height:46px;overflow:hidden">
<div style="top:7.54px;font-size:24.4px;line-height:30px;color:#ffffff;white-space:pre;left:0px;">prosthetic</div>
</div>
<div style="left:1051px;top:872px;width:626px;height:46px;overflow:hidden">
<div style="top:9.14px;font-size:22.675830293722406px;line-height:28px;color:#ffffff;white-space:pre;left:0px;">CC[C@H]1C2=NC(=CC3=NC(=C(C)C3=C(C)O)C=C3[N-]C...</div>
</div>
<div style="left:1691px;top:872px;width:166px;height:46px;overflow:hidden">
<div style="top:6.97px;font-size:24.6px;line-height:31px;color:#ffffff;white-space:pre;left:0px;">4</div>
</div>
<div style="left:1871px;top:872px;width:246px;height:46px;overflow:hidden">
<div style="top:6.97px;font-size:24.6px;line-height:31px;color:#ffffff;white-space:pre;left:0px;">154</div>
</div>
<div style="left:0;top:966px;width:2400px;height:2px;background:#3b424c"></div>
<div style="left:11px;top:920px;width:546px;height:46px;overflow:hidden">
<div style="top:6.95px;font-size:24.67113473538248px;line-height:31px;color:#ffffff;white-space:pre;left:0px;">bacteriopheophytin</div>
</div>
<div style="left:571px;top:920px;width:226px;height:46px;overflow:hidden">
<div style="top:7.54px;font-size:24.4px;line-height:30px;color:#ffffff;white-space:pre;left:0px;">organic</div>
</div>
<div style="left:811px;top:920px;width:226px;height:46px;overflow:hidden">
<div style="top:7.54px;font-size:24.4px;line-height:30px;color:#ffffff;white-space:pre;left:0px;">unknown</div>
</div>
<div style="left:1051px;top:920px;width:626px;height:46px;overflow:hidden">
<div style="top:8.43px;font-size:23.27378464334393px;line-height:29px;color:#ffffff;white-space:pre;left:0px;">CC[C@H]1c2cc3[nH]c4c(c3C)C(=O)[C@H]...</div>
</div>
<div style="left:1691px;top:920px;width:166px;height:46px;overflow:hidden">
<div style="top:6.97px;font-size:24.6px;line-height:31px;color:#ffffff;white-space:pre;left:0px;">4</div>
</div>
<div style="left:1871px;top:920px;width:246px;height:46px;overflow:hidden">
<div style="top:6.97px;font-size:24.6px;line-height:31px;color:#ffffff;white-space:pre;left:0px;">134</div>
</div>
<div style="left:0;top:1014px;width:2400px;height:2px;background:#3b424c"></div>
<div style="left:11px;top:968px;width:546px;height:46px;overflow:hidden">
<div style="top:6.95px;font-size:24.674698795180724px;line-height:31px;color:#ffffff;white-space:pre;left:0px;">barium(2+)</div>
</div>
<div style="left:571px;top:968px;width:226px;height:46px;overflow:hidden">
<div style="top:7.54px;font-size:24.4px;line-height:30px;color:#ffffff;white-space:pre;left:0px;">metal</div>
</div>
<div style="left:811px;top:968px;width:226px;height:46px;overflow:hidden">
<div style="top:7.54px;font-size:24.4px;line-height:30px;color:#ffffff;white-space:pre;left:0px;">prosthetic</div>
</div>
<div style="left:1051px;top:968px;width:626px;height:46px;overflow:hidden">
<div style="top:7.58px;font-size:24.286886708296166px;line-height:30px;color:#ffffff;white-space:pre;left:0px;">[Ba+2]</div>
</div>
<div style="left:1691px;top:968px;width:166px;height:46px;overflow:hidden">
<div style="top:6.97px;font-size:24.6px;line-height:31px;color:#ffffff;white-space:pre;left:0px;">2</div>
</div>
<div style="left:1871px;top:968px;width:246px;height:46px;overflow:hidden">
<div style="top:6.97px;font-size:24.6px;line-height:31px;color:#ffffff;white-space:pre;left:0px;">235</div>
</div>
<div style="left:0;top:1062px;width:2400px;height:2px;background:#3b424c"></div>
<div style="left:11px;top:1016px;width:546px;height:46px;overflow:hidden">
<div style="top:6.96px;font-size:24.63044624960439px;line-height:31px;color:#ffffff;white-space:pre;left:0px;">beta-carotene</div>
</div>
<div style="left:571px;top:1016px;width:226px;height:46px;overflow:hidden">
<div style="top:7.54px;font-size:24.4px;line-height:30px;color:#ffffff;white-space:pre;left:0px;">organic</div>
</div>
<div style="left:811px;top:1016px;width:226px;height:46px;overflow:hidden">
<div style="top:7.54px;font-size:24.4px;line-height:30px;color:#ffffff;white-space:pre;left:0px;">unknown</div>
</div>
<div style="left:1051px;top:1016px;width:626px;height:46px;overflow:hidden">
<div style="top:9.10px;font-size:22.78260327357755px;line-height:28px;color:#ffffff;white-space:pre;left:0px;">CC1=C(/C=C/C(C)=C/C=C/C(C)=C/C=C/C=C(C)/C=C/...</div>
</div>
<div style="left:1691px;top:1016px;width:166px;height:46px;overflow:hidden">
<div style="top:6.97px;font-size:24.6px;line-height:31px;color:#ffffff;white-space:pre;left:0px;">7</div>
</div>
<div style="left:1871px;top:1016px;width:246px;height:46px;overflow:hidden">
<div style="top:6.97px;font-size:24.6px;line-height:31px;color:#ffffff;white-space:pre;left:0px;">141</div>
</div>
<div style="left:2131px;top:1016px;width:269px;height:46px;overflow:hidden">
<div style="top:7.82px;font-size:23.6px;line-height:30px;color:#ffffff;white-space:pre;left:0px;">CHEMBL1293</div>
</div>
<div style="left:0;top:1110px;width:2400px;height:2px;background:#3b424c"></div>
<div style="left:11px;top:1064px;width:546px;height:46px;overflow:hidden">
<div style="top:7.59px;font-size:24.2508783344177px;line-height:30px;color:#ffffff;white-space:pre;left:0px;">binuclear copper ion</div>
</div>
<div style="left:571px;top:1064px;width:226px;height:46px;overflow:hidden">
<div style="top:7.54px;font-size:24.4px;line-height:30px;color:#ffffff;white-space:pre;left:0px;">metal</div>
</div>
<div style="left:811px;top:1064px;width:226px;height:46px;overflow:hidden">
<div style="top:7.54px;font-size:24.4px;line-height:30px;color:#ffffff;white-space:pre;left:0px;">prosthetic</div>
</div>
<div style="left:1051px;top:1064px;width:626px;height:46px;overflow:hidden">
<div style="top:6.26px;font-size:25.218420467185762px;line-height:32px;color:#ffffff;white-space:pre;left:0px;">[*][Cu]([*])[Cu]([*])[*]</div>
</div>
<div style="left:1691px;top:1064px;width:166px;height:46px;overflow:hidden">
<div style="top:6.97px;font-size:24.6px;line-height:31px;color:#ffffff;white-space:pre;left:0px;">18</div>
</div>
<div style="left:1871px;top:1064px;width:246px;height:46px;overflow:hidden">
<div style="top:6.97px;font-size:24.6px;line-height:31px;color:#ffffff;white-space:pre;left:0px;">151</div>
</div>
<div style="left:0;top:1158px;width:2400px;height:2px;background:#3b424c"></div>
<div style="left:11px;top:1112px;width:546px;height:46px;overflow:hidden">
<div style="top:6.90px;font-size:24.8036866359447px;line-height:31px;color:#ffffff;white-space:pre;left:0px;">biocytin</div>
</div>
<div style="left:571px;top:1112px;width:226px;height:46px;overflow:hidden">
<div style="top:7.54px;font-size:24.4px;line-height:30px;color:#ffffff;white-space:pre;left:0px;">organic</div>
</div>
<div style="left:811px;top:1112px;width:226px;height:46px;overflow:hidden">
<div style="top:7.54px;font-size:24.4px;line-height:30px;color:#ffffff;white-space:pre;left:0px;">mixed</div>
</div>
<div style="left:1051px;top:1112px;width:626px;height:46px;overflow:hidden">
<div style="top:9.32px;font-size:22.1627972027972px;line-height:28px;color:#ffffff;white-space:pre;left:0px;">N[C@@H]...</div>
</div>
<div style="left:1691px;top:1112px;width:166px;height:46px;overflow:hidden">
<div style="top:6.97px;font-size:24.6px;line-height:31px;color:#ffffff;white-space:pre;left:0px;">0</div>
</div>
<div style="left:1871px;top:1112px;width:246px;height:46px;overflow:hidden">
<div style="top:6.97px;font-size:24.6px;line-height:31px;color:#ffffff;white-space:pre;left:0px;">1</div>
</div>
<div style="left:0;top:1206px;width:2400px;height:2px;background:#3b424c"></div>
<div style="left:11px;top:1160px;width:546px;height:46px;overflow:hidden">
<div style="top:6.80px;font-size:25.098039215686274px;line-height:31px;color:#ffffff;white-space:pre;left:0px;">biotin</div>
</div>
<div style="left:571px;top:1160px;width:226px;height:46px;overflow:hidden">
<div style="top:7.54px;font-size:24.4px;line-height:30px;color:#ffffff;white-space:pre;left:0px;">organic</div>
</div>
<div style="left:811px;top:1160px;width:226px;height:46px;overflow:hidden">
<div style="top:7.54px;font-size:24.4px;line-height:30px;color:#ffffff;white-space:pre;left:0px;">prosthetic</div>
</div>
<div style="left:1051px;top:1160px;width:626px;height:46px;overflow:hidden">
<div style="top:9.27px;font-size:22.302229039360725px;line-height:28px;color:#ffffff;white-space:pre;left:0px;">O=C(O)CCCC[C@@H]1SC[C@@H]2NC(=O)N[C@@H]21</div>
</div>
<div style="left:1691px;top:1160px;width:166px;height:46px;overflow:hidden">
<div style="top:6.97px;font-size:24.6px;line-height:31px;color:#ffffff;white-space:pre;left:0px;">0</div>
</div>
<div style="left:1871px;top:1160px;width:246px;height:46px;overflow:hidden">
<div style="top:6.97px;font-size:24.6px;line-height:31px;color:#ffffff;white-space:pre;left:0px;">111</div>
</div>
<div style="left:2131px;top:1160px;width:269px;height:46px;overflow:hidden">
<div style="top:7.82px;font-size:23.6px;line-height:30px;color:#ffffff;white-space:pre;left:0px;">CHEMBL857</div>
</div>
<div style="left:0;top:1254px;width:2400px;height:2px;background:#3b424c"></div>
<div style="left:11px;top:1208px;width:546px;height:46px;overflow:hidden">
<div style="top:6.84px;font-size:24.96528925619835px;line-height:31px;color:#ffffff;white-space:pre;left:0px;">biotinate</div>
</div>
<div style="left:571px;top:1208px;width:226px;height:46px;overflow:hidden">
<div style="top:7.54px;font-size:24.4px;line-height:30px;color:#ffffff;white-space:pre;left:0px;">organic</div>
</div>
<div style="left:811px;top:1208px;width:226px;height:46px;overflow:hidden">
<div style="top:7.54px;font-size:24.4px;line-height:30px;color:#ffffff;white-space:pre;left:0px;">prosthetic</div>
</div>
<div style="left:1051px;top:1208px;width:626px;height:46px;overflow:hidden">
<div style="top:9.19px;font-size:22.51839372038482px;line-height:28px;color:#ffffff;white-space:pre;left:0px;">O=C([O-])CCCC[C@@H]1SC[C@@H]2NC(=O)N[C@@H]21</div>
</div>
<div style="left:1691px;top:1208px;width:166px;height:46px;overflow:hidden">
<div style="top:6.97px;font-size:24.6px;line-height:31px;color:#ffffff;white-space:pre;left:0px;">85</div>
</div>
<div style="left:1871px;top:1208px;width:246px;height:46px;overflow:hidden">
<div style="top:6.97px;font-size:24.6px;line-height:31px;color:#ffffff;white-space:pre;left:0px;">111</div>
</div>
<div style="left:0;top:1302px;width:2400px;height:2px;background:#3b424c"></div>
<div style="left:11px;top:1256px;width:546px;height:46px;overflow:hidden">
<div style="top:6.93px;font-size:24.72143500696208px;line-height:31px;color:#ffffff;white-space:pre;left:0px;">bis(molybdopterin)tungsten cofactor</div>
</div>
<div style="left:571px;top:1256px;width:226px;height:46px;overflow:hidden">
<div style="top:7.54px;font-size:24.4px;line-height:30px;color:#ffffff;white-space:pre;left:0px;">organometallic</div>
</div>
<div style="left:811px;top:1256px;width:226px;height:46px;overflow:hidden">
<div style="top:7.54px;font-size:24.4px;line-height:30px;color:#ffffff;white-space:pre;left:0px;">prosthetic</div>
</div>
<div style="left:1051px;top:1256px;width:626px;height:46px;overflow:hidden">
<div style="top:7.76px;font-size:23.763863135324492px;line-height:30px;color:#ffffff;white-space:pre;left:0px;">N=c1nc([O-])c2c([nH]1)NC1OC(COP(=O)([O-])...</div>
</div>
<div style="left:1691px;top:1256px;width:166px;height:46px;overflow:hidden">
<div style="top:6.97px;font-size:24.6px;line-height:31px;color:#ffffff;white-space:pre;left:0px;">7</div>
</div>
<div style="left:1871px;top:1256px;width:246px;height:46px;overflow:hidden">
<div style="top:6.97px;font-size:24.6px;line-height:31px;color:#ffffff;white-space:pre;left:0px;">4</div>
</div>
<div style="left:0;top:1350px;width:2400px;height:2px;background:#3b424c"></div>
<div style="left:11px;top:1304px;width:546px;height:46px;overflow:hidden">
<div style="top:7.01px;font-size:24.491405729513655px;line-height:31px;color:#ffffff;white-space:pre;left:0px;">cadmium(2+)</div>
</div>
<div style="left:571px;top:1304px;width:226px;height:46px;overflow:hidden">
<div style="top:7.54px;font-size:24.4px;line-height:30px;color:#ffffff;white-space:pre;left:0px;">metal</div>
</div>
<div style="left:811px;top:1304px;width:226px;height:46px;overflow:hidden">
<div style="top:7.54px;font-size:24.4px;line-height:30px;color:#ffffff;white-space:pre;left:0px;">prosthetic</div>
</div>
<div style="left:1051px;top:1304px;width:626px;height:46px;overflow:hidden">
<div style="top:7.74px;font-size:23.835062376887723px;line-height:30px;color:#ffffff;white-space:pre;left:0px;">[Cd+2]</div>
</div>
<div style="left:1691px;top:1304px;width:166px;height:46px;overflow:hidden">
<div style="top:6.97px;font-size:24.6px;line-height:31px;color:#ffffff;white-space:pre;left:0px;">15</div>
</div>
<div style="left:1871px;top:1304px;width:246px;height:46px;overflow:hidden">
<div style="top:6.97px;font-size:24.6px;line-height:31px;color:#ffffff;white-space:pre;left:0px;">1241</div>
</div>
<div style="left:0;top:1398px;width:2400px;height:2px;background:#3b424c"></div>
<div style="left:11px;top:1352px;width:546px;height:46px;overflow:hidden">
<div style="top:7.55px;font-size:24.368927250308264px;line-height:30px;color:#ffffff;white-space:pre;left:0px;">calcium cation</div>
</div>
<div style="left:571px;top:1352px;width:226px;height:46px;overflow:hidden">
<div style="top:7.54px;font-size:24.4px;line-height:30px;color:#ffffff;white-space:pre;left:0px;">metal</div>
</div>
<div style="left:811px;top:1352px;width:226px;height:46px;overflow:hidden">
<div style="top:7.54px;font-size:24.4px;line-height:30px;color:#ffffff;white-space:pre;left:0px;">prosthetic</div>
</div>
<div style="left:1051px;top:1352px;width:626px;height:46px;overflow:hidden">
<div style="top:8.35px;font-size:23.498883782009194px;line-height:29px;color:#ffffff;white-space:pre;left:0px;">[Ca+2]</div>
</div>
<div style="left:1691px;top:1352px;width:166px;height:46px;overflow:hidden">
<div style="top:6.97px;font-size:24.6px;line-height:31px;color:#ffffff;white-space:pre;left:0px;">0</div>
</div>
<div style="left:1871px;top:1352px;width:246px;height:46px;overflow:hidden">
<div style="top:6.97px;font-size:24.6px;line-height:31px;color:#ffffff;white-space:pre;left:0px;">14302</div>
</div>
<div style="left:0;top:1446px;width:2400px;height:2px;background:#3b424c"></div>
<div style="left:11px;top:1400px;width:546px;height:46px;overflow:hidden">
<div style="top:7.00px;font-size:24.51903270266884px;line-height:31px;color:#ffffff;white-space:pre;left:0px;">calcium(2+)</div>
</div>
<div style="left:571px;top:1400px;width:226px;height:46px;overflow:hidden">
<div style="top:7.54px;font-size:24.4px;line-height:30px;color:#ffffff;white-space:pre;left:0px;">metal</div>
</div>
<div style="left:811px;top:1400px;width:226px;height:46px;overflow:hidden">
<div style="top:7.54px;font-size:24.4px;line-height:30px;color:#ffffff;white-space:pre;left:0px;">prosthetic</div>
</div>
<div style="left:1051px;top:1400px;width:626px;height:46px;overflow:hidden">
<div style="top:8.35px;font-size:23.498883782009194px;line-height:29px;color:#ffffff;white-space:pre;left:0px;">[Ca+2]</div>
</div>
<div style="left:1691px;top:1400px;width:166px;height:46px;overflow:hidden">
<div style="top:6.97px;font-size:24.6px;line-height:31px;color:#ffffff;white-space:pre;left:0px;">3273</div>
</div>
<div style="left:1871px;top:1400px;width:246px;height:46px;overflow:hidden">
<div style="top:6.97px;font-size:24.6px;line-height:31px;color:#ffffff;white-space:pre;left:0px;">14302</div>
</div>
<div style="left:558px;top:56px;width:2px;height:1400px;background:#3b424c"></div>
<div style="left:798px;top:56px;width:2px;height:1400px;background:#3b424c"></div>
<div style="left:1038px;top:56px;width:2px;height:1400px;background:#3b424c"></div>
<div style="left:1678px;top:56px;width:2px;height:1400px;background:#3b424c"></div>
<div style="left:1858px;top:56px;width:2px;height:1400px;background:#3b424c"></div>
<div style="left:2118px;top:56px;width:2px;height:1400px;background:#3b424c"></div>
</div>
<div style="left:26px;top:514px;width:2354px;height:1478px;border:2px solid #4a5360;border-radius:5px;box-sizing:border-box"></div>
<div style="left:2350px;top:514px;width:28px;height:1448px;background:#1f2227;"></div>
<div style="left:2351px;top:517px;width:27px;height:27px;background:#1f2227;border-top:1px solid #9a9a9a;border-left:1px solid #9a9a9a;border-right:2px solid #000;border-bottom:2px solid #000;box-sizing:border-box"></div>
<svg style="left:0;top:0" width="3835" height="2301"><path d="M2358.5 533.5 L2370.5 533.5 L2364.5 527.5 Z" fill="#a5a8ac"/></svg>
<div style="left:2351px;top:545px;width:27px;height:207px;background:#1f2227;border-top:1px solid #9a9a9a;border-left:1px solid #9a9a9a;border-right:2px solid #000;border-bottom:2px solid #000;box-sizing:border-box"></div>
<div style="left:2351px;top:1935px;width:27px;height:27px;background:#1f2227;border-top:1px solid #9a9a9a;border-left:1px solid #9a9a9a;border-right:2px solid #000;border-bottom:2px solid #000;box-sizing:border-box"></div>
<svg style="left:0;top:0" width="3835" height="2301"><path d="M2358.5 1945.5 L2370.5 1945.5 L2364.5 1951.5 Z" fill="#a5a8ac"/></svg>
<div style="left:27px;top:1962px;width:2323px;height:28px;background:#1f2227;"></div>
<div style="left:28px;top:1963px;width:27px;height:27px;background:#1f2227;border-top:1px solid #9a9a9a;border-left:1px solid #9a9a9a;border-right:2px solid #000;border-bottom:2px solid #000;box-sizing:border-box"></div>
<svg style="left:0;top:0" width="3835" height="2301"><path d="M44.5 1970.5 L44.5 1982.5 L38.5 1976.5 Z" fill="#a5a8ac"/></svg>
<div style="left:56px;top:1963px;width:1982px;height:27px;background:#1f2227;border-top:1px solid #9a9a9a;border-left:1px solid #9a9a9a;border-right:2px solid #000;border-bottom:2px solid #000;box-sizing:border-box"></div>
<div style="left:2323px;top:1963px;width:27px;height:27px;background:#1f2227;border-top:1px solid #9a9a9a;border-left:1px solid #9a9a9a;border-right:2px solid #000;border-bottom:2px solid #000;box-sizing:border-box"></div>
<svg style="left:0;top:0" width="3835" height="2301"><path d="M2333.5 1970.5 L2333.5 1982.5 L2339.5 1976.5 Z" fill="#a5a8ac"/></svg>
<div style="left:2350px;top:1962px;width:28px;height:28px;background:#2a2f37;"></div>
<div style="left:27px;top:1990px;width:2351px;height:2px;background:#4a5360;"></div>
<div style="left:2379px;top:514px;width:11px;height:1478px;background:#323e4a;border-radius:5px;"></div>
<div style="left:2390px;top:514px;width:1420px;height:1478px;border:2px solid #35485a;border-left:none;box-sizing:border-box"></div>
<div style="left:2406px;top:532px;width:164px;height:48px;background:#0078d7;border-radius:10px;"></div>
<div style="top:542.44px;font-size:24px;line-height:30px;color:#ffffff;white-space:pre;left:2386.0px;width:204px;text-align:center;">Copy Name</div>
<div style="top:536.73px;font-size:32.5px;line-height:41px;color:#ffffff;white-space:pre;font-weight:700;left:2583px;transform:scaleX(0.912);transform-origin:0 0;">5-formyltetrahydrofolic acid</div>
<div style="left:3604px;top:532px;width:160px;height:48px;background:#0078d7;border-radius:10px;"></div>
<div style="top:542.44px;font-size:24px;line-height:30px;color:#ffffff;white-space:pre;left:3584.0px;width:200px;text-align:center;">Pin to Sash</div>
<div style="top:598.35px;font-size:23.5px;line-height:29px;color:#9aa3ad;white-space:pre;left:2407px;">Enzyme links: 0 (UniProt: 0, EC: 0, Organisms: 0)</div>
<div style="top:645.68px;font-size:24px;line-height:30px;color:#ffffff;white-space:pre;left:2407px;">RDKit 2D Structure</div>
<div style="top:645.78px;font-size:23.7px;line-height:30px;color:#9aa3ad;white-space:pre;left:2623px;">Rendered from SMILES</div>
<div style="left:2406px;top:693px;width:1357px;height:438px;background:#ffffff;border:2px solid #c8c8c8;border-radius:15px;box-sizing:border-box"></div>
<svg style="left:0;top:0" width="3835" height="2301">
<g stroke-width="3" stroke-linecap="butt">
<line x1="2760.5" y1="852.5" x2="2764.9" y2="833.9" stroke="#000000"/>
<line x1="2764.9" y1="833.9" x2="2769.8" y2="815.3" stroke="#ff0000"/>
<line x1="2722.9" y1="863.8" x2="2741.5" y2="858.1" stroke="#0000ff"/>
<line x1="2741.5" y1="858.1" x2="2760.5" y2="852.5" stroke="#000000"/>
<line x1="2725.8" y1="873.5" x2="2741.5" y2="868.3" stroke="#0000ff"/>
<line x1="2741.5" y1="868.3" x2="2758.4" y2="863" stroke="#000000"/>
<line x1="2706.7" y1="882.4" x2="2702.2" y2="901.3" stroke="#0000ff"/>
<line x1="2702.2" y1="901.3" x2="2699" y2="917.1" stroke="#000000"/>
<line x1="2698.9" y1="914.7" x2="2678.9" y2="921.2" stroke="#000000"/>
<line x1="2678.9" y1="921.2" x2="2658.5" y2="926.8" stroke="#0000ff"/>
<line x1="2700.2" y1="923.6" x2="2681.6" y2="930.1" stroke="#000000"/>
<line x1="2681.6" y1="930.1" x2="2661.4" y2="936.5" stroke="#0000ff"/>
<line x1="2699" y1="918.7" x2="2711.2" y2="932.5" stroke="#000000"/>
<line x1="2711.2" y1="932.5" x2="2724.5" y2="944.3" stroke="#0000ff"/>
<line x1="2750.4" y1="952.7" x2="2769" y2="946.6" stroke="#0000ff"/>
<line x1="2769" y1="946.6" x2="2788" y2="941.1" stroke="#000000"/>
<line x1="2788" y1="941.1" x2="2799.7" y2="888.8" stroke="#000000"/>
<line x1="2779.8" y1="932.5" x2="2789.5" y2="892.6" stroke="#000000"/>
<line x1="2799.7" y1="888.8" x2="2760.5" y2="852.5" stroke="#000000"/>
<line x1="2799.7" y1="888.8" x2="2819.1" y2="882.9" stroke="#000000"/>
<line x1="2819.1" y1="882.9" x2="2838" y2="876.7" stroke="#0000ff"/>
<line x1="2854.2" y1="858.6" x2="2858.7" y2="840.3" stroke="#0000ff"/>
<line x1="2858.7" y1="840.3" x2="2862.7" y2="821.4" stroke="#000000"/>
<line x1="2862.7" y1="821.4" x2="2881.3" y2="815.6" stroke="#000000"/>
<line x1="2881.3" y1="815.6" x2="2899.1" y2="809.6" stroke="#ff0000"/>
<line x1="2872.4" y1="829" x2="2883.8" y2="825" stroke="#000000"/>
<line x1="2883.8" y1="825" x2="2902.4" y2="819.3" stroke="#ff0000"/>
<line x1="2863.5" y1="885.1" x2="2876.8" y2="896.9" stroke="#0000ff"/>
<line x1="2876.8" y1="896.9" x2="2889.4" y2="909.4" stroke="#000000"/>
<line x1="2889.4" y1="909.4" x2="2878.1" y2="961.6" stroke="#000000"/>
<line x1="2878.1" y1="961.6" x2="2858.7" y2="967.3" stroke="#000000"/>
<line x1="2858.7" y1="967.3" x2="2840.1" y2="973.4" stroke="#0000ff"/>
<line x1="2814.2" y1="965.3" x2="2801.3" y2="952.7" stroke="#0000ff"/>
<line x1="2801.3" y1="952.7" x2="2788" y2="941.1" stroke="#000000"/>
<line x1="2889.4" y1="909.4" x2="2940.3" y2="893.7" stroke="#000000"/>
<line x1="2940.3" y1="893.7" x2="2954.1" y2="906.1" stroke="#000000"/>
<line x1="2954.1" y1="906.1" x2="2966.7" y2="917.9" stroke="#0000ff"/>
<line x1="2992.6" y1="926.6" x2="3011.1" y2="920.7" stroke="#0000ff"/>
<line x1="3011.1" y1="920.7" x2="3030.4" y2="914.6" stroke="#000000"/>
<line x1="3030.4" y1="914.6" x2="3042" y2="862.1" stroke="#000000"/>
<line x1="3042" y1="862.1" x2="3093.5" y2="846.7" stroke="#000000"/>
<line x1="3051.5" y1="869.8" x2="3090.3" y2="857.9" stroke="#000000"/>
<line x1="3093.5" y1="846.7" x2="3132.4" y2="883.5" stroke="#000000"/>
<line x1="3132.4" y1="883.5" x2="3120.8" y2="936" stroke="#000000"/>
<line x1="3121.9" y1="887.7" x2="3112.4" y2="927.2" stroke="#000000"/>
<line x1="3120.8" y1="936" x2="3069.3" y2="951.2" stroke="#000000"/>
<line x1="3069.3" y1="951.2" x2="3030.4" y2="914.6" stroke="#000000"/>
<line x1="3071.4" y1="939.8" x2="3041" y2="912.9" stroke="#000000"/>
<line x1="3132.4" y1="883.5" x2="3182.8" y2="868.8" stroke="#000000"/>
<line x1="3178.6" y1="868.8" x2="3182.2" y2="850.3" stroke="#000000"/>
<line x1="3182.2" y1="850.3" x2="3187" y2="831" stroke="#ff0000"/>
<line x1="3188.1" y1="870.5" x2="3191.9" y2="852" stroke="#000000"/>
<line x1="3191.9" y1="852" x2="3196.5" y2="832" stroke="#ff0000"/>
<line x1="3182.8" y1="868.8" x2="3196.5" y2="880.3" stroke="#000000"/>
<line x1="3196.5" y1="880.3" x2="3210.2" y2="892.3" stroke="#0000ff"/>
<line x1="3235.4" y1="900.7" x2="3254.3" y2="894.6" stroke="#0000ff"/>
<line x1="3254.3" y1="894.6" x2="3274.3" y2="888.8" stroke="#000000"/>
<line x1="3273.7" y1="889.3" x2="3284.9" y2="838.2" stroke="#000000"/>
<line x1="3284.5" y1="840.8" x2="3270.4" y2="829.3" stroke="#000000"/>
<line x1="3270.4" y1="829.3" x2="3256.7" y2="817.4" stroke="#ff0000"/>
<line x1="3290" y1="834.1" x2="3276.7" y2="821.9" stroke="#000000"/>
<line x1="3276.7" y1="821.9" x2="3263.7" y2="809.6" stroke="#ff0000"/>
<line x1="3284.9" y1="838.2" x2="3304.1" y2="831.1" stroke="#000000"/>
<line x1="3304.1" y1="831.1" x2="3322.3" y2="825.6" stroke="#ff0000"/>
<line x1="3312" y1="925.5" x2="3363.6" y2="909.8" stroke="#000000"/>
<line x1="3363.6" y1="909.8" x2="3402.5" y2="945.5" stroke="#000000"/>
<line x1="3402.5" y1="945.5" x2="3420.3" y2="940.3" stroke="#000000"/>
<line x1="3420.3" y1="940.3" x2="3439.3" y2="934.4" stroke="#ff0000"/>
<line x1="3401.4" y1="946.6" x2="3397.2" y2="962.3" stroke="#000000"/>
<line x1="3397.2" y1="962.3" x2="3390.9" y2="982.3" stroke="#ff0000"/>
<line x1="3407.7" y1="947.6" x2="3403.5" y2="964.4" stroke="#000000"/>
<line x1="3403.5" y1="964.4" x2="3398.3" y2="984.4" stroke="#ff0000"/>
<line x1="3277.41" y1="891.55" x2="3276.34" y2="892.74" stroke="#000" stroke-width="1.8"/>
<line x1="3281.14" y1="894.32" x2="3279.49" y2="896.15" stroke="#000" stroke-width="1.8"/>
<line x1="3284.87" y1="897.08" x2="3282.64" y2="899.56" stroke="#000" stroke-width="1.8"/>
<line x1="3288.60" y1="899.84" x2="3285.80" y2="902.97" stroke="#000" stroke-width="1.8"/>
<line x1="3292.33" y1="902.60" x2="3288.95" y2="906.38" stroke="#000" stroke-width="1.8"/>
<line x1="3296.06" y1="905.37" x2="3292.10" y2="909.78" stroke="#000" stroke-width="1.8"/>
<line x1="3299.79" y1="908.13" x2="3295.25" y2="913.19" stroke="#000" stroke-width="1.8"/>
<line x1="3303.52" y1="910.89" x2="3298.40" y2="916.60" stroke="#000" stroke-width="1.8"/>
<line x1="3307.25" y1="913.65" x2="3301.55" y2="920.01" stroke="#000" stroke-width="1.8"/>
<line x1="3310.98" y1="916.42" x2="3304.70" y2="923.42" stroke="#000" stroke-width="1.8"/>
</g>
<text x="2780" y="808.3" fill="#ff0000" font-size="20.5" text-anchor="middle" font-family="Liberation Sans, sans-serif">OH</text>
<text x="2710" y="875.9" fill="#0000ff" font-size="20.5" text-anchor="middle" font-family="Liberation Sans, sans-serif">N</text>
<text x="2640" y="943.0" fill="#0000ff" font-size="20.5" text-anchor="middle" font-family="Liberation Sans, sans-serif">HN</text>
<text x="2737.4" y="963.3" fill="#0000ff" font-size="20.5" text-anchor="middle" font-family="Liberation Sans, sans-serif">N</text>
<text x="2737.4" y="980.3" fill="#0000ff" font-size="20.5" text-anchor="middle" font-family="Liberation Sans, sans-serif">H</text>
<text x="2851" y="880.8" fill="#0000ff" font-size="20.5" text-anchor="middle" font-family="Liberation Sans, sans-serif">N</text>
<text x="2915" y="818.0" fill="#ff0000" font-size="20.5" text-anchor="middle" font-family="Liberation Sans, sans-serif">O</text>
<text x="2827.2" y="984.3" fill="#0000ff" font-size="20.5" text-anchor="middle" font-family="Liberation Sans, sans-serif">N</text>
<text x="2827.2" y="1001.3" fill="#0000ff" font-size="20.5" text-anchor="middle" font-family="Liberation Sans, sans-serif">H</text>
<text x="2980" y="937.3" fill="#0000ff" font-size="20.5" text-anchor="middle" font-family="Liberation Sans, sans-serif">N</text>
<text x="2980" y="954.3" fill="#0000ff" font-size="20.5" text-anchor="middle" font-family="Liberation Sans, sans-serif">H</text>
<text x="3195.4" y="823.5" fill="#ff0000" font-size="20.5" text-anchor="middle" font-family="Liberation Sans, sans-serif">O</text>
<text x="3222.8" y="912.9" fill="#0000ff" font-size="20.5" text-anchor="middle" font-family="Liberation Sans, sans-serif">N</text>
<text x="3222.8" y="929.6999999999999" fill="#0000ff" font-size="20.5" text-anchor="middle" font-family="Liberation Sans, sans-serif">H</text>
<text x="3246.5" y="807.8" fill="#ff0000" font-size="20.5" text-anchor="middle" font-family="Liberation Sans, sans-serif">O</text>
<text x="3344" y="828.8" fill="#ff0000" font-size="20.5" text-anchor="middle" font-family="Liberation Sans, sans-serif">OH</text>
<text x="3460.3" y="938.0999999999999" fill="#ff0000" font-size="20.5" text-anchor="middle" font-family="Liberation Sans, sans-serif">OH</text>
<text x="3389.9" y="1005.3" fill="#ff0000" font-size="20.5" text-anchor="middle" font-family="Liberation Sans, sans-serif">O</text>
</svg>
<div style="top:1156.08px;font-size:24px;line-height:30px;color:#ffffff;white-space:pre;left:1976.5px;width:600px;text-align:right;">ChEBI:</div>
<div style="left:2598px;top:1148px;width:104px;height:44px;background:#0078d7;border-radius:10px;"></div>
<div style="top:1156.44px;font-size:24px;line-height:30px;color:#ffffff;white-space:pre;left:2578.0px;width:144px;text-align:center;">Copy</div>
<div style="top:1156.08px;font-size:24px;line-height:30px;color:#ffffff;white-space:pre;left:2714.3px;">CHEBI:15640</div>
<div style="top:1207.68px;font-size:24px;line-height:30px;color:#ffffff;white-space:pre;left:1976.5px;width:600px;text-align:right;">Short Name:</div>
<div style="left:2598px;top:1200px;width:104px;height:44px;background:#0078d7;border-radius:10px;"></div>
<div style="top:1208.44px;font-size:24px;line-height:30px;color:#ffffff;white-space:pre;left:2578.0px;width:144px;text-align:center;">Copy</div>
<div style="top:1207.68px;font-size:24px;line-height:30px;color:#ffffff;white-space:pre;left:2714.3px;">5-FTHF</div>
<div style="top:1260.18px;font-size:24px;line-height:30px;color:#ffffff;white-space:pre;left:1976.5px;width:600px;text-align:right;">Formula:</div>
<div style="left:2598px;top:1252.5px;width:104px;height:43.5px;background:#0078d7;border-radius:10px;"></div>
<div style="top:1260.69px;font-size:24px;line-height:30px;color:#ffffff;white-space:pre;left:2578.0px;width:144px;text-align:center;">Copy</div>
<div style="top:1260.18px;font-size:24px;line-height:30px;color:#ffffff;white-space:pre;left:2714.3px;">C20H23N7O7</div>
<div style="top:1305.28px;font-size:24px;line-height:30px;color:#ffffff;white-space:pre;left:1976.5px;width:600px;text-align:right;">Charge:</div>
<div style="top:1305.28px;font-size:24px;line-height:30px;color:#ffffff;white-space:pre;left:2599px;">0</div>
<div style="top:1345.48px;font-size:24px;line-height:30px;color:#ffffff;white-space:pre;left:1976.5px;width:600px;text-align:right;">Type:</div>
<div style="top:1345.48px;font-size:24px;line-height:30px;color:#ffffff;white-space:pre;left:2599px;">organic</div>
<div style="top:1385.68px;font-size:24px;line-height:30px;color:#ffffff;white-space:pre;left:1976.5px;width:600px;text-align:right;">Binding Mode:</div>
<div style="top:1385.68px;font-size:24px;line-height:30px;color:#ffffff;white-space:pre;left:2599px;">cosubstrate</div>
<div style="top:1425.68px;font-size:24px;line-height:30px;color:#ffffff;white-space:pre;left:1976.5px;width:600px;text-align:right;">Metal:</div>
<div style="top:1425.68px;font-size:24px;line-height:30px;color:#ffffff;white-space:pre;left:2599px;">No</div>
<div style="top:1465.38px;font-size:24px;line-height:30px;color:#ffffff;white-space:pre;left:1976.5px;width:600px;text-align:right;">Prosthetic:</div>
<div style="top:1465.38px;font-size:24px;line-height:30px;color:#ffffff;white-space:pre;left:2599px;">No</div>
<div style="top:1512.38px;font-size:24px;line-height:30px;color:#ffffff;white-space:pre;left:1976.5px;width:600px;text-align:right;">KEGG:</div>
<div style="left:2598px;top:1504.4px;width:104px;height:43.59999999999991px;background:#0078d7;border-radius:10px;"></div>
<div style="top:1512.64px;font-size:24px;line-height:30px;color:#ffffff;white-space:pre;left:2578.0px;width:144px;text-align:center;">Copy</div>
<div style="top:1512.38px;font-size:24px;line-height:30px;color:#ffffff;white-space:pre;left:2714.3px;">C03479</div>
<div style="top:1564.18px;font-size:24px;line-height:30px;color:#ffffff;white-space:pre;left:1976.5px;width:600px;text-align:right;">PDBe:</div>
<div style="left:2598px;top:1556px;width:104px;height:43px;background:#0078d7;border-radius:10px;"></div>
<div style="top:1563.94px;font-size:24px;line-height:30px;color:#ffffff;white-space:pre;left:2578.0px;width:144px;text-align:center;">Copy</div>
<div style="top:1564.18px;font-size:24px;line-height:30px;color:#ffffff;white-space:pre;left:2714.3px;">FFO</div>
<div style="top:1616.38px;font-size:24px;line-height:30px;color:#ffffff;white-space:pre;left:1976.5px;width:600px;text-align:right;">PDB HET:</div>
<div style="left:2598px;top:1608.5px;width:104px;height:43.0px;background:#0078d7;border-radius:10px;"></div>
<div style="top:1616.44px;font-size:24px;line-height:30px;color:#ffffff;white-space:pre;left:2578.0px;width:144px;text-align:center;">Copy</div>
<div style="top:1616.38px;font-size:24px;line-height:30px;color:#ffffff;white-space:pre;left:2714.3px;">FFO</div>
<div style="top:1667.98px;font-size:24px;line-height:30px;color:#ffffff;white-space:pre;left:1976.5px;width:600px;text-align:right;">ChEMBL:</div>
<div style="left:2598px;top:1660.4px;width:104px;height:43.0px;background:#0078d7;border-radius:10px;"></div>
<div style="top:1668.34px;font-size:24px;line-height:30px;color:#ffffff;white-space:pre;left:2578.0px;width:144px;text-align:center;">Copy</div>
<div style="top:1667.98px;font-size:24px;line-height:30px;color:#ffffff;white-space:pre;left:2714.3px;">CHEMBL1679</div>
<div style="top:1720.18px;font-size:24px;line-height:30px;color:#ffffff;white-space:pre;left:1976.5px;width:600px;text-align:right;">ZINC:</div>
<div style="left:2598px;top:1712.2px;width:104px;height:43.399999999999864px;background:#0078d7;border-radius:10px;"></div>
<div style="top:1720.34px;font-size:24px;line-height:30px;color:#ffffff;white-space:pre;left:2578.0px;width:144px;text-align:center;">Copy</div>
<div style="top:1766.18px;font-size:24px;line-height:30px;color:#ffffff;white-space:pre;left:1976.5px;width:600px;text-align:right;">PDB Structures:</div>
<div style="top:1766.18px;font-size:24px;line-height:30px;color:#ffffff;white-space:pre;left:2599px;">25</div>
<div style="top:1805.68px;font-size:24px;line-height:30px;color:#ffffff;white-space:pre;left:1976.5px;width:600px;text-align:right;">Confidence:</div>
<div style="top:1805.68px;font-size:24px;line-height:30px;color:#ffffff;white-space:pre;left:2599px;">seed</div>
<div style="top:1845.68px;font-size:24px;line-height:30px;color:#ffffff;white-space:pre;left:1976.5px;width:600px;text-align:right;">Source:</div>
<div style="top:1845.68px;font-size:24px;line-height:30px;color:#ffffff;white-space:pre;left:2599px;">CoFactor canonical set + ChEBI OLS curation (2026-03-05)</div>
<div style="left:2406px;top:1892px;width:104px;height:44px;background:#0078d7;border-radius:10px;"></div>
<div style="top:1900.44px;font-size:24px;line-height:30px;color:#ffffff;white-space:pre;left:2386.0px;width:144px;text-align:center;">Copy</div>
<div style="top:1899.68px;font-size:24px;line-height:30px;color:#ffffff;white-space:pre;left:2522.4px;">SMILES</div>
<div style="left:2406px;top:1952px;width:1358px;height:39px;overflow:hidden">
<div style="left:0;top:0;width:1358px;height:80px;background:#2a2f37;border:2px solid #4a5361;border-radius:10px;box-sizing:border-box"></div>
<div style="top:11.49px;font-size:23.1px;line-height:29px;color:#ffffff;white-space:pre;left:10.5px;">N=c1nc(O)c2c([nH]1)NCC(CNc1ccc(C(=O)N[C@@H](CCC(=O)O)C(=O)O)cc1)N2C=O</div>
</div>
<div style="left:3781px;top:516px;width:27px;height:1474px;background:#1f2227;"></div>
<div style="left:3781px;top:517px;width:27px;height:27px;background:#1f2227;border-top:1px solid #9a9a9a;border-left:1px solid #9a9a9a;border-right:2px solid #000;border-bottom:2px solid #000;box-sizing:border-box"></div>
<svg style="left:0;top:0" width="3835" height="2301"><path d="M3788.5 533.5 L3800.5 533.5 L3794.5 527.5 Z" fill="#a5a8ac"/></svg>
<div style="left:3781px;top:545px;width:27px;height:395px;background:#1f2227;border-top:1px solid #9a9a9a;border-left:1px solid #9a9a9a;border-right:2px solid #000;border-bottom:2px solid #000;box-sizing:border-box"></div>
<div style="left:3781px;top:1963px;width:27px;height:27px;background:#1f2227;border-top:1px solid #9a9a9a;border-left:1px solid #9a9a9a;border-right:2px solid #000;border-bottom:2px solid #000;box-sizing:border-box"></div>
<svg style="left:0;top:0" width="3835" height="2301"><path d="M3788.5 1973.5 L3800.5 1973.5 L3794.5 1979.5 Z" fill="#a5a8ac"/></svg>
<div style="top:2009.54px;font-size:24.4px;line-height:30px;color:#9aa3ad;white-space:pre;left:26.5px;">187 cofactors loaded.</div>
<svg style="left:0;top:2040px" width="200" height="218" viewBox="0 2040 200 218">
<g fill="none">
<g stroke="#0c3a4f" stroke-width="8">
<ellipse cx="94" cy="2161" rx="25.5" ry="67.5"/>
<ellipse cx="94" cy="2161" rx="25.5" ry="67.5" transform="rotate(60 94 2161)"/>
<ellipse cx="94" cy="2161" rx="25.5" ry="67.5" transform="rotate(-60 94 2161)"/>
</g>
<polygon points="94,2131 120,2146 120,2176 94,2191 68,2176 68,2146" fill="#0c3a4f"/>
<g stroke="#c0e830" stroke-width="5">
<ellipse cx="94" cy="2161" rx="25.5" ry="67.5"/>
<ellipse cx="94" cy="2161" rx="25.5" ry="67.5" transform="rotate(60 94 2161)"/>
<ellipse cx="94" cy="2161" rx="25.5" ry="67.5" transform="rotate(-60 94 2161)"/>
</g></g>
<path d="M86 2148 Q84 2146 86 2146 L111 2160 Q112 2161 111 2162 L87 2177 Q85 2178 85 2176 Z" fill="#0078d7"/>
<circle cx="41" cy="2143" r="6" fill="#c0e830"/>
<circle cx="147.5" cy="2181.5" r="6" fill="#c0e830"/>
</svg>
<div style="left:0px;top:2258px;width:3835px;height:40px;background:#0b384d;"></div>
<div style="left:0px;top:2297px;width:3835px;height:2px;background:#4a4550;"></div>
<div style="left:0px;top:2299px;width:3835px;height:2px;background:#231c2a;"></div>
<div style="top:2264.77px;font-size:22px;line-height:28px;color:#c3e33a;white-space:pre;left:2880.8px;width:800px;text-align:right;">made by Dr. Josiah Newton, <i>c. 2026</i></div>
<div style="top:2266.29px;font-size:20.5px;line-height:26px;color:#8fb0cc;white-space:pre;left:3513px;width:300px;text-align:right;">build 0.3.1</div>
</body></html>
